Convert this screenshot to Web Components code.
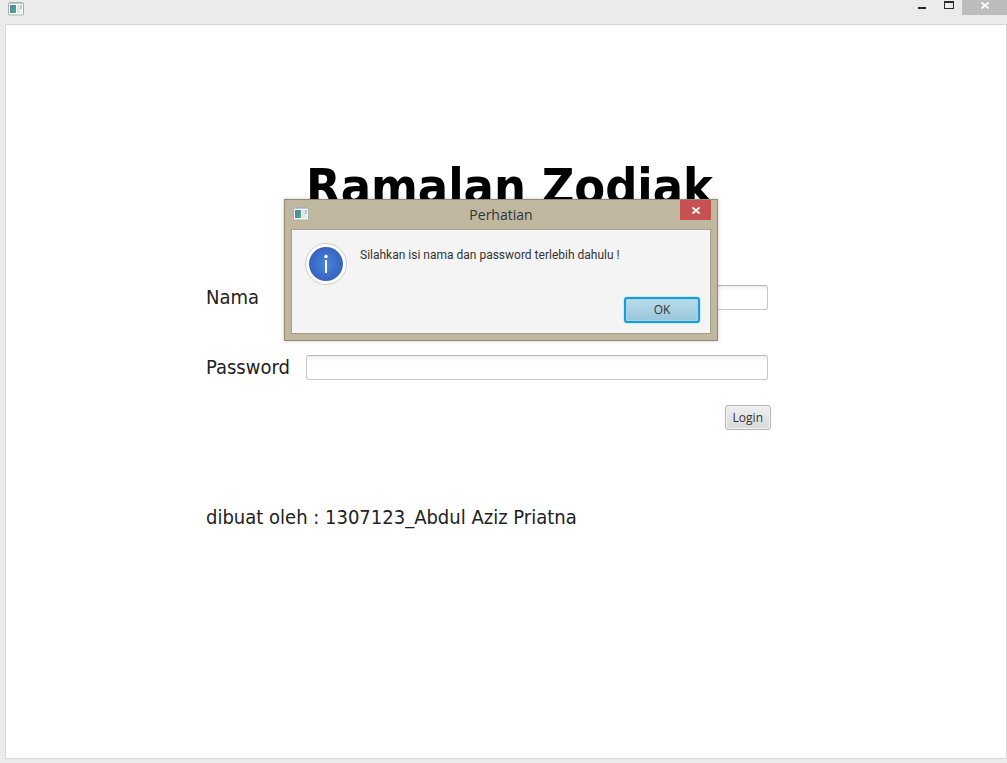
<!DOCTYPE html>
<html lang="id">
<head>
<meta charset="utf-8">
<title>Ramalan Zodiak</title>
<style>
  html, body { height: 100%; margin: 0; }
  body { background: #ebebeb; color: #222; font-family: "DejaVu Sans Condensed", "DejaVu Sans", sans-serif; }
</style>
</head>
<body>
<app-window>
  <login-form heading="Ramalan Zodiak" credit="dibuat oleh : 1307123_Abdul Aziz Priatna"></login-form>
  <alert-dialog slot="overlay" heading="Perhatian">Silahkan isi nama dan password terlebih dahulu !</alert-dialog>
</app-window>

<script>
class BaseElement extends HTMLElement {
  constructor() {
    super();
    this.attachShadow({ mode: "open" }).innerHTML = this.render();
  }
}

customElements.define("app-icon", class extends BaseElement {
  render() {
    return `
      <style>:host { display: block; width: 16px; height: 14px; } svg { display: block; }</style>
      <svg width="16" height="14" viewBox="0 0 16 14" aria-hidden="true">
        <defs><linearGradient id="g" x1="0" y1="0" x2="1" y2="1">
          <stop offset="0" stop-color="#4a86a8"/><stop offset="1" stop-color="#52ab84"/>
        </linearGradient></defs>
        <rect x=".5" y=".5" width="15" height="12.5" rx="1" fill="#f8f9f9" stroke="#a9adb2"/>
        <rect x="1" y="1" width="14" height="1" fill="#c2c8d0"/>
        <rect x="2" y="3" width="6" height="8" fill="url(#g)"/>
        <rect x="9" y="3" width="3" height="8" fill="#e2e4e2"/>
        <rect x="12" y="3" width="2" height="4" fill="#a8cfc8"/>
        <rect x="12" y="7" width="2" height="4" fill="#edf1ee"/>
      </svg>`;
  }
});

customElements.define("app-window", class extends BaseElement {
  render() {
    return `
      <style>
        :host { display: flex; flex-direction: column; position: relative; box-sizing: border-box;
          min-height: 100%; padding: 0 0 4px 5px; background: #ebebeb; }
        header { display: flex; justify-content: space-between; align-items: flex-start; height: 24px; }
        app-icon { margin: 2px 0 0 3px; }
        .controls { display: flex; }
        button { display: block; height: 15px; width: 27px; padding: 0; border: 0; background: none; }
        button.close { width: 45px; background: #bcbcbc; }
        svg { display: block; margin: 0 auto; }
        main { flex: 1; background: #fff; border: 1px solid #d8d8d8; }
      </style>
      <header>
        <app-icon></app-icon>
        <div class="controls">
          <button type="button" aria-label="Minimize"><svg width="27" height="15"><rect x="10" y="7" width="8" height="2" fill="#262a2c"/></svg></button>
          <button type="button" aria-label="Maximize"><svg width="27" height="15"><path d="M9 1h10v8H9zM10 3v5h8V3z" fill="#262a2c" fill-rule="evenodd"/></svg></button>
          <button type="button" class="close" aria-label="Close"><svg width="45" height="15"><path d="M19.500 2.500l7 6M26.500 2.500l-7 6" stroke="#fff" stroke-width="1.700"/></svg></button>
        </div>
      </header>
      <main><slot></slot></main>
      <slot name="overlay"></slot>`;
  }
});

customElements.define("login-form", class extends BaseElement {
  render() {
    return `
      <style>
        :host { display: block; padding: 132px 238px 0 200px; font-size: 20px; line-height: 25px; }
        form { display: grid; grid-template-columns: 100px 1fr; row-gap: 45px; align-items: center; }
        h1 { grid-column: 2; margin: 0 0 23px; font-size: 50px; line-height: 60px; color: #000; white-space: nowrap; }
        input { box-sizing: border-box; width: 100%; height: 25px; padding: 0 7px; font: 12px "Open Sans", sans-serif;
          border: 1px solid #c8c8c8; border-top-color: #b5b5b5; border-radius: 3px; outline: 0;
          background: linear-gradient(#f0f0f0, #fff 5px); }
        .actions { grid-column: 2; display: flex; justify-content: flex-end; margin: -20px -3px 0 0; }
        button { box-sizing: border-box; height: 25px; padding: 0 7px; border: 1px solid #b5b5b5; border-radius: 3px;
          background: linear-gradient(#efefef, #d9d9d9); box-shadow: inset 0 0 0 1px #f3f3f3; color: #333;
          font: 12px/20px "Open Sans", sans-serif; }
        p { grid-column: 1 / -1; margin: 30px 0 0; }
      </style>
      <form>
        <h1>${this.getAttribute("heading")}</h1>
        <label for="nama">Nama</label><input id="nama" type="text">
        <label for="password">Password</label><input id="password" type="password">
        <div class="actions"><button type="button">Login</button></div>
        <p>${this.getAttribute("credit")}</p>
      </form>`;
  }
});

customElements.define("info-icon", class extends BaseElement {
  render() {
    return `
      <style>:host { display: block; } svg { display: block; }</style>
      <svg width="42" height="42" viewBox="0 0 42 42" aria-hidden="true">
        <defs><radialGradient id="g"><stop offset="0" stop-color="#4787dc"/><stop offset="1" stop-color="#3763bd"/></radialGradient></defs>
        <circle cx="21" cy="21" r="20.500" fill="#fff" stroke="#ccc"/>
        <circle cx="21" cy="21" r="17" fill="url(#g)"/>
        <circle cx="21" cy="13.500" r="1.700" fill="#fff"/>
        <rect x="20" y="17" width="2" height="13" fill="#fff"/>
      </svg>`;
  }
});

customElements.define("alert-dialog", class extends BaseElement {
  render() {
    return `
      <style>
        :host { position: absolute; left: 284px; top: 199px; font-family: "Open Sans", sans-serif; }
        dialog { position: static; display: block; box-sizing: border-box; width: 434px; margin: 0; padding: 0 6px 6px;
          border: 1px solid #928a76; background: #c0b7a1; color: #333; box-shadow: 0 0 4px rgba(0,0,0,.2); }
        header { display: grid; grid-template-columns: 31px 1fr 31px; align-items: start; height: 29px; }
        app-icon { margin: 7px 0 0 2px; }
        h2 { margin: 5px 0 0; font-size: 14px; line-height: 20px; font-weight: 400; text-align: center; }
        .close { display: block; width: 31px; height: 20px; padding: 0; border: 0; background: #c75050; }
        svg { display: block; }
        .body { box-sizing: border-box; min-height: 105px; padding: 13px 10px 9px 13px; border: 1px solid #a79f89; background: #f4f4f4; }
        .message { display: flex; gap: 13px; }
        p { margin: 3px 0 0; font: 12px/18px Roboto, sans-serif; white-space: nowrap; }
        .actions { display: flex; justify-content: flex-end; margin-top: 12px; }
        .ok { box-sizing: border-box; width: 76px; height: 26px; border: 2px solid #169fd0; border-radius: 3px;
          background: linear-gradient(#b8dcec, #9bc5da); box-shadow: 0 0 2px #7dcbe8, inset 0 0 0 1px #a6d3e6;
          font: 12px/20px "Open Sans", sans-serif; color: #333; padding: 0; }
      </style>
      <dialog open aria-labelledby="title">
        <header>
          <app-icon></app-icon>
          <h2 id="title">${this.getAttribute("heading")}</h2>
          <button type="button" class="close" aria-label="Close"><svg width="31" height="20"><path d="M12.500 7.500l7 6M19.500 7.500l-7 6" stroke="#fff" stroke-width="1.700"/></svg></button>
        </header>
        <div class="body">
          <div class="message"><info-icon></info-icon><p><slot></slot></p></div>
          <div class="actions"><button type="button" class="ok">OK</button></div>
        </div>
      </dialog>`;
  }
});
</script>
</body>
</html>
